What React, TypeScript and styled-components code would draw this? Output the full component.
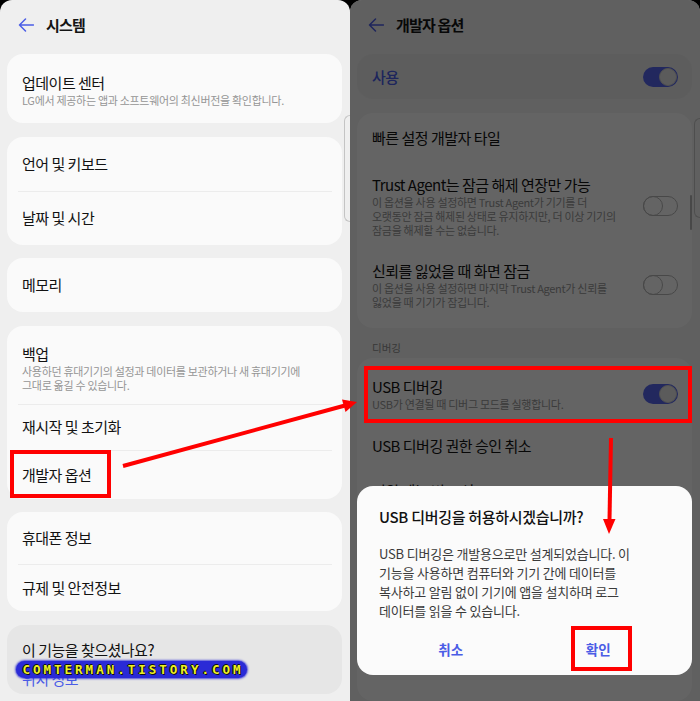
import styled, { createGlobalStyle } from 'styled-components';

const GlobalStyle = createGlobalStyle`
  html, body {
    margin: 0;
    padding: 0;
    background: #000;
  }
  body {
    font-family: "Noto Sans CJK KR", "Noto Sans", sans-serif;
  }
  * {
    box-sizing: border-box;
  }
`;

const BLUE = '#4b5de6';

function BackArrow() {
  return (
    <svg width="16" height="14" viewBox="0 0 16 14" fill="none">
      <path d="M15.5 7H1.5M7.5 1L1.5 7L7.5 13" stroke={BLUE} strokeWidth="1.5" strokeLinecap="round" strokeLinejoin="round" />
    </svg>
  );
}

export default function App() {
  return (
    <>
      <GlobalStyle />
      <Screen>
        <Panel>
          <Header>
            <BackArrow />
            <HeaderTitle>시스템</HeaderTitle>
          </Header>
          <List>
            <Card>
              <SubRow $top={19} $bottom={16}>
                <TextCol>
                  <Title>업데이트 센터</Title>
                  <Sub>LG에서 제공하는 앱과 소프트웨어의 최신버전을 확인합니다.</Sub>
                </TextCol>
              </SubRow>
            </Card>
            <Card>
              <Row $h={54}>
                <Title>언어 및 키보드</Title>
              </Row>
              <Divider />
              <Row $h={53}>
                <Title>날짜 및 시간</Title>
              </Row>
            </Card>
            <Card>
              <Row $h={54}>
                <Title>메모리</Title>
              </Row>
            </Card>
            <Card>
              <SubRow $top={18} $bottom={12}>
                <TextCol>
                  <Title>백업</Title>
                  <Sub>
                    사용하던 휴대기기의 설정과 데이터를 보관하거나 새 휴대기기에
                    <br />
                    그대로 옮길 수 있습니다.
                  </Sub>
                </TextCol>
              </SubRow>
              <Divider />
              <Row $h={45}>
                <Title>재시작 및 초기화</Title>
              </Row>
              <Divider />
              <Row $h={48}>
                <Title>개발자 옵션</Title>
              </Row>
            </Card>
            <Card>
              <Row $h={52}>
                <Title>휴대폰 정보</Title>
              </Row>
              <Divider />
              <Row $h={46}>
                <Title>규제 및 안전정보</Title>
              </Row>
            </Card>
            <Card $tone="#e6e6e6">
              <SuggestBox>
                <Title>이 기능을 찾으셨나요?</Title>
                <Link>위치 정보</Link>
              </SuggestBox>
            </Card>
          </List>
          <EdgeGlow $top={115} $height={107} />
        </Panel>

        <Panel>
          <Header>
            <BackArrow />
            <HeaderTitle>개발자 옵션</HeaderTitle>
          </Header>
          <MasterCard>
            <MasterLabel>사용</MasterLabel>
            <Toggle $on />
          </MasterCard>
          <Card>
            <Row $h={50}>
              <Title>빠른 설정 개발자 타일</Title>
            </Row>
            <SubRow $top={12} $bottom={12}>
              <TextCol>
                <Title>Trust Agent는 잠금 해제 연장만 가능</Title>
                <Sub>
                  이 옵션을 사용 설정하면 Trust Agent가 기기를 더
                  <br />
                  오랫동안 잠금 해제된 상태로 유지하지만, 더 이상 기기의
                  <br />
                  잠금을 해제할 수는 없습니다.
                </Sub>
              </TextCol>
              <Toggle />
            </SubRow>
            <SubRow $top={12} $bottom={19}>
              <TextCol>
                <Title>신뢰를 잃었을 때 화면 잠금</Title>
                <Sub>
                  이 옵션을 사용 설정하면 마지막 Trust Agent가 신뢰를
                  <br />
                  잃었을 때 기기가 잠깁니다.
                </Sub>
              </TextCol>
              <Toggle />
            </SubRow>
          </Card>
          <SectionLabel>디버깅</SectionLabel>
          <Card $grow>
            <SubRow $top={19} $bottom={12}>
              <TextCol>
                <Title>USB 디버깅</Title>
                <Sub>USB가 연결될 때 디버그 모드를 실행합니다.</Sub>
              </TextCol>
              <Toggle $on />
            </SubRow>
            <Row $h={45}>
              <Title>USB 디버깅 권한 승인 취소</Title>
            </Row>
            <Row $h={46}>
              <Title>전원 메뉴 버그 신고</Title>
            </Row>
          </Card>
          <EdgeGlow $top={118} $height={100} />
          <ScrollThumb />
          <Dim />
          <Dialog>
            <DialogTitle>USB 디버깅을 허용하시겠습니까?</DialogTitle>
            <DialogBody>
              USB 디버깅은 개발용으로만 설계되었습니다. 이
              <br />
              기능을 사용하면 컴퓨터와 기기 간에 데이터를
              <br />
              복사하고 알림 없이 기기에 앱을 설치하며 로그
              <br />
              데이터를 읽을 수 있습니다.
            </DialogBody>
            <DialogActions>
              <DialogButton>취소</DialogButton>
              <DialogButton>확인</DialogButton>
            </DialogActions>
          </Dialog>
        </Panel>

        <Watermark>COMTERMAN.TISTORY.COM</Watermark>

        <Annotations width="700" height="701" viewBox="0 0 700 701">
          <rect x="12" y="452" width="97" height="44" />
          <rect x="366" y="368" width="324" height="53" />
          <rect x="573" y="628" width="57" height="41" />
          <line x1="123" y1="466" x2="345" y2="405.5" />
          <polygon points="357,402 345.5,412 342,399.5" />
          <line x1="611" y1="438" x2="609.5" y2="520" />
          <polygon points="609,534 603,519 615.5,519" />
        </Annotations>
      </Screen>
    </>
  );
}

const Screen = styled.div`
  position: relative;
  width: 700px;
  height: 701px;
  display: flex;
  overflow: hidden;
  background: #000;
`;

const Panel = styled.section`
  position: relative;
  width: 350px;
  height: 701px;
  flex: none;
  display: flex;
  flex-direction: column;
  padding: 0 8px 0 7px;
  background: #efefef;
  border-radius: 12px 12px 0 0;
  overflow: hidden;
`;

const Header = styled.header`
  height: 50px;
  margin-bottom: 4px;
  display: flex;
  align-items: center;
  gap: 12px;
  padding-left: 11px;
  flex: none;
`;

const HeaderTitle = styled.h1`
  margin: 0;
  font-size: 15px;
  line-height: 20px;
  font-weight: 700;
  letter-spacing: -0.8px;
  color: #141414;
`;

const List = styled.div`
  display: flex;
  flex-direction: column;
  gap: 13.5px;
`;

const Card = styled.div<{ $tone?: string; $grow?: boolean }>`
  flex: ${(p) => (p.$grow ? '1 0 auto' : 'none')};
  display: flex;
  flex-direction: column;
  background: ${(p) => p.$tone ?? '#fafafa'};
  border-radius: 16px;
  overflow: hidden;
`;

const Row = styled.div<{ $h: number }>`
  height: ${(p) => p.$h}px;
  flex: none;
  display: flex;
  align-items: center;
  justify-content: space-between;
  padding: 0 14px 0 15px;
`;

const SubRow = styled.div<{ $top: number; $bottom: number }>`
  flex: none;
  display: flex;
  align-items: center;
  justify-content: space-between;
  padding: ${(p) => `${p.$top}px 14px ${p.$bottom}px 15px`};
`;

const TextCol = styled.div`
  display: flex;
  flex-direction: column;
`;

const Title = styled.div`
  font-size: 15px;
  line-height: 20px;
  letter-spacing: -0.5px;
  color: #121212;
  white-space: nowrap;
`;

const Sub = styled.div`
  font-size: 11px;
  line-height: 14px;
  letter-spacing: -0.3px;
  color: #959595;
  white-space: nowrap;
`;

const Divider = styled.div`
  height: 1px;
  flex: none;
  margin: 0 10px 0 11px;
  background: #ececec;
`;

const SuggestBox = styled.div`
  display: flex;
  flex-direction: column;
  padding: 15px 15px 6px;
`;

const Link = styled.div`
  margin-top: 10px;
  font-size: 15px;
  line-height: 18px;
  letter-spacing: -0.5px;
  color: ${BLUE};
`;

const MasterCard = styled.div`
  height: 45px;
  flex: none;
  margin-bottom: 14px;
  display: flex;
  align-items: center;
  justify-content: space-between;
  padding: 0 14px 0 15px;
  background: #e9e9e9;
  border-radius: 16px;
`;

const MasterLabel = styled.div`
  font-size: 15px;
  line-height: 20px;
  font-weight: 500;
  letter-spacing: -0.5px;
  color: ${BLUE};
`;

const SectionLabel = styled.div`
  flex: none;
  padding: 13px 15px 3px;
  font-size: 10.5px;
  line-height: 14px;
  color: #8c8c8c;
`;

const Toggle = styled.span<{ $on?: boolean }>`
  position: relative;
  flex: none;
  width: 35px;
  height: 20px;
  border-radius: 10px;
  background: ${(p) => (p.$on ? '#5565ec' : 'transparent')};
  border: ${(p) => (p.$on ? 'none' : '1.5px solid #b4b4b4')};

  &::after {
    content: '';
    position: absolute;
    top: ${(p) => (p.$on ? '1px' : '-1.5px')};
    ${(p) => (p.$on ? 'right: 1px;' : 'left: -1.5px;')}
    width: ${(p) => (p.$on ? '18px' : '20px')};
    height: ${(p) => (p.$on ? '18px' : '20px')};
    border-radius: 50%;
    box-sizing: border-box;
    background: ${(p) => (p.$on ? '#e4e4e4' : 'transparent')};
    border: 1.5px solid ${(p) => (p.$on ? '#c8c8c8' : '#b4b4b4')};
  }
`;

const EdgeGlow = styled.div<{ $top: number; $height: number }>`
  position: absolute;
  right: 0;
  top: ${(p) => p.$top}px;
  width: 6px;
  height: ${(p) => p.$height}px;
  border: 1px solid #c4c4c4;
  border-right: none;
  border-radius: 8px 0 0 8px;
`;

const ScrollThumb = styled.div`
  position: absolute;
  right: 8px;
  top: 195px;
  width: 2px;
  height: 35px;
  border-radius: 1px;
  background: #b3b3b3;
`;

const Dim = styled.div`
  position: absolute;
  inset: 0;
  background: rgba(0, 0, 0, 0.6);
`;

const Dialog = styled.div`
  position: absolute;
  left: 7px;
  top: 486px;
  width: 335px;
  height: 189px;
  display: flex;
  flex-direction: column;
  padding: 21px 0 6px;
  background: #fbfbfb;
  border-radius: 16px;
`;

const DialogTitle = styled.div`
  padding: 0 20px 0 22px;
  font-size: 15px;
  line-height: 20px;
  font-weight: 500;
  letter-spacing: -0.3px;
  color: #111;
`;

const DialogBody = styled.div`
  margin-top: 16.5px;
  padding: 0 20px 0 22px;
  font-size: 13px;
  line-height: 19px;
  letter-spacing: -0.2px;
  color: #3a3a3a;
  white-space: nowrap;
`;

const DialogActions = styled.div`
  margin-top: 9.5px;
  height: 40px;
  display: grid;
  grid-template-columns: 1fr 1fr;
  padding: 0 20px;
`;

const DialogButton = styled.div`
  display: flex;
  align-items: center;
  justify-content: center;
  font-size: 13.5px;
  font-weight: 700;
  color: ${BLUE};
`;

const Watermark = styled.div`
  position: absolute;
  left: 16px;
  top: 661px;
  width: 231px;
  height: 17px;
  display: flex;
  align-items: center;
  justify-content: center;
  padding-left: 3px;
  background: #2a2ad6;
  border-radius: 9px;
  box-shadow: 0 0 2px 1px rgba(42, 42, 214, 0.8);
  font-family: "DejaVu Sans Mono", "Liberation Mono", monospace;
  font-size: 12.5px;
  font-weight: 700;
  letter-spacing: 3px;
  color: #eef020;
  text-shadow: 1px 1px 0 #111, -1px 0 0 #111, 0 -1px 0 #111;
`;

const Annotations = styled.svg`
  position: absolute;
  left: 0;
  top: 0;
  pointer-events: none;

  rect {
    fill: none;
    stroke: #ff0000;
    stroke-width: 4;
  }
  line {
    stroke: #ff0000;
    stroke-width: 4;
  }
  polygon {
    fill: #ff0000;
  }
`;
